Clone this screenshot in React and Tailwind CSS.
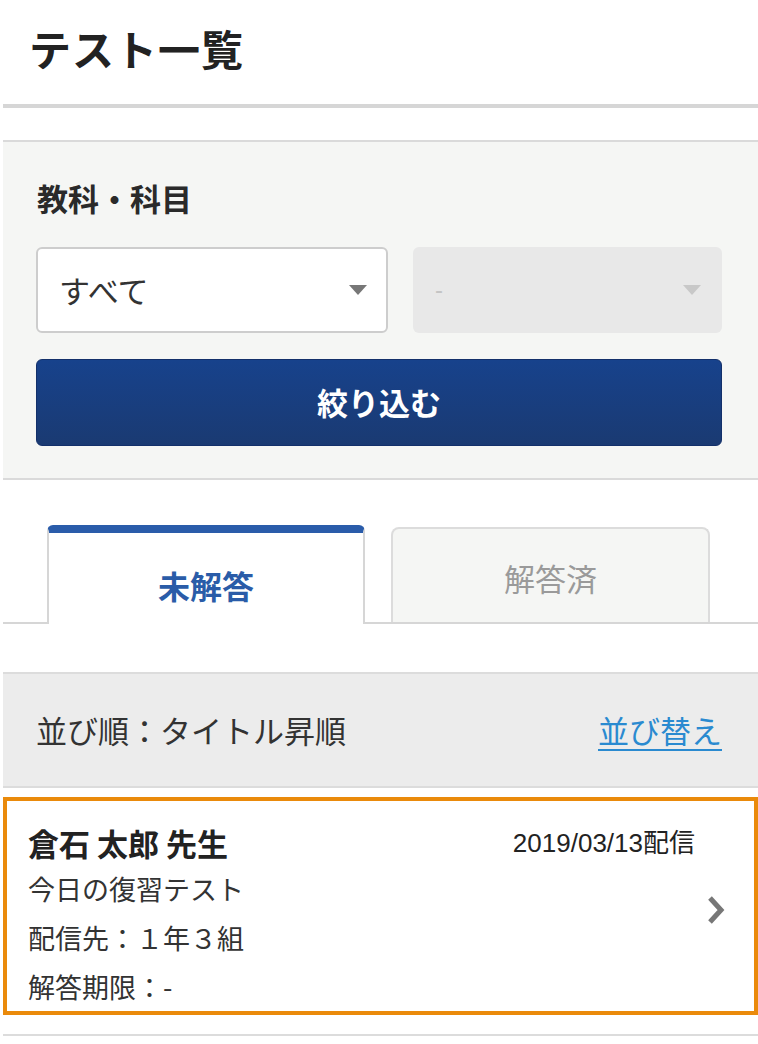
import React from "react";

const jp = { fontFamily: '"Noto Sans CJK JP", "Noto Sans", sans-serif' };

function Caret({ color }) {
  return (
    <svg width="18" height="10" viewBox="0 0 18 10">
      <polygon points="0,0 18,0 9,10" fill={color} />
    </svg>
  );
}

export default function App() {
  return (
    <div className="w-[758px] min-h-[1044px] bg-white pl-[3px] text-[#333]" style={jp}>
      {/* Header */}
      <div className="h-[104px] flex items-center pl-[26px] pb-[8px]">
        <h1 className="text-[42px] leading-none font-bold text-[#222] tracking-[1px]">テスト一覧</h1>
      </div>
      <div className="h-[4px] bg-[#d6d6d6]" />
      <div className="h-[32px]" />

      {/* Filter panel */}
      <div className="border-t-2 border-b-2 border-[#dadada] bg-[#f5f6f4] px-[33px] pt-[40px] pb-[32px]">
        <div className="text-[31px] leading-[32px] font-bold text-[#2a2a2a] pl-[1px]">教科・科目</div>
        <div className="mt-[33px] flex gap-[25px]">
          <div className="w-[352px] h-[86px] rounded-[6px] border-2 border-[#cdcdcd] bg-white flex items-center justify-between pl-[21px] pr-[19px]">
            <span className="text-[31px] text-[#333]">すべて</span>
            <Caret color="#777" />
          </div>
          <div className="w-[309px] h-[86px] rounded-[6px] bg-[#e8e8e8] flex items-center justify-between pl-[22px] pr-[21px]">
            <span className="text-[24px] text-[#c4c4c4]" style={{ fontFamily: '"Liberation Sans", sans-serif' }}>-</span>
            <Caret color="#c8c8c8" />
          </div>
        </div>
        <button className="mt-[26px] w-[686px] h-[87px] rounded-[6px] border border-[#13306a] bg-gradient-to-b from-[#17428c] to-[#1a3a72] text-white text-[31px] font-bold flex items-center justify-center">
          絞り込む
        </button>
      </div>

      {/* Tabs */}
      <div className="pt-[47px]">
        <div className="flex items-end gap-[26px] pl-[44px] border-b-2 border-[#d6d6d6] h-[97px]">
          <div className="relative -mb-[2px] w-[318px] h-[99px] bg-white border-x-2 border-[#d6d6d6] border-t-[8px] border-t-[#2a5caa] rounded-t-[6px] flex items-center justify-center">
            <span className="text-[32px] font-bold text-[#2a5ca8] pt-[12px]">未解答</span>
          </div>
          <div className="w-[319px] h-[95px] bg-[#f5f6f4] border-2 border-b-0 border-[#dcdcdc] rounded-t-[8px] flex items-center justify-center">
            <span className="text-[31px] text-[#9a9a9a] pt-[6px]">解答済</span>
          </div>
        </div>
      </div>

      {/* Sort bar */}
      <div className="mt-[48px] h-[116px] border-y-2 border-[#dcdcdc] bg-[#ececec] flex items-center justify-between pl-[33px] pr-[36px]">
        <span className="text-[31px] text-[#333]">並び順：タイトル昇順</span>
        <span className="text-[31px] text-[#2a8ad0] underline underline-offset-[6px] decoration-2">並び替え</span>
      </div>

      {/* Card */}
      <div className="relative mt-[9px] border-[4px] border-[#ea8a0b] bg-white pl-[21px] pr-[60px] pt-[24px]">
        <div className="flex items-center justify-between">
          <span className="text-[31px] leading-[36px] font-bold text-[#222]">倉石 太郎 先生</span>
          <span className="text-[26px] leading-[36px] text-[#222] -mr-[1px]" style={{ fontFamily: '"Liberation Sans", "Noto Sans CJK JP", sans-serif' }}>
            2019/03/13配信
          </span>
        </div>
        <div className="mt-[3px] text-[27px] leading-[49px] text-[#333]">今日の復習テスト</div>
        <div className="text-[27px] leading-[49px] text-[#333]">配信先：１年３組</div>
        <div className="text-[27px] leading-[49px] text-[#333]">解答期限：-</div>
        <div className="absolute right-[28px] top-[94px]">
          <svg width="20" height="30" viewBox="0 0 20 30">
            <path d="M4 3 L15 15 L4 27" fill="none" stroke="#777" strokeWidth="5" strokeLinecap="butt" strokeLinejoin="miter" />
          </svg>
        </div>
      </div>

      <div className="mt-[19px] h-[2px] bg-[#dcdcdc]" />
    </div>
  );
}
